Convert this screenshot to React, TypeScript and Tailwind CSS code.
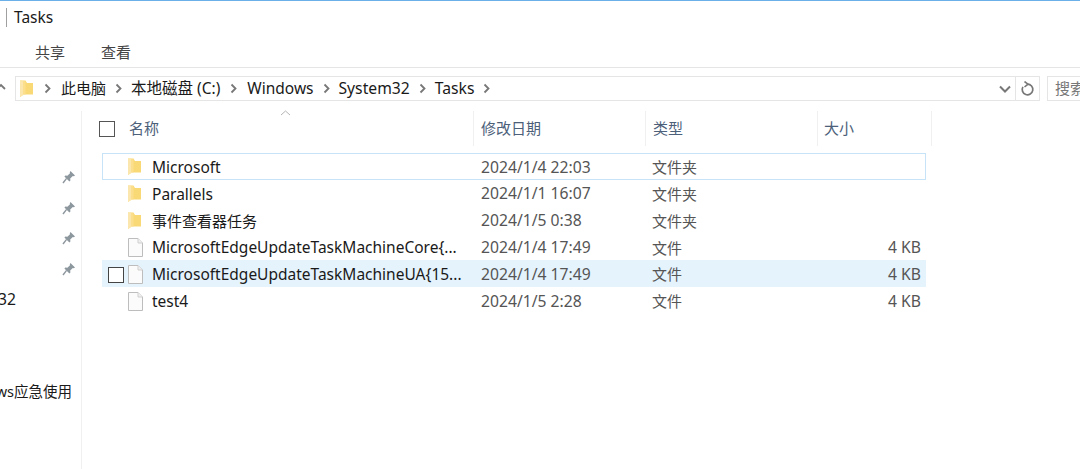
import React from "react";

const FONT = { fontFamily: '"Noto Sans", "Noto Sans CJK SC", sans-serif' };

function Folder({ className = "" }: { className?: string }) {
  return (
    <svg width="13" height="18" viewBox="0 0 13 18" className={`shrink-0 ${className}`}>
      <path d="M0 0.5h5.5L7 3h6v11.5H3.5L0 17z" fill="#f9d976" />
      <path d="M0 0.5h3.5V15L0 17z" fill="#fbe7ae" />
      <path d="M3.5 1h2v13.5h-2z" fill="#fcdf8c" />
    </svg>
  );
}

function FileIcon() {
  return (
    <svg width="15" height="19" viewBox="0 0 15 19" className="shrink-0">
      <path d="M.5.5h9.5l4.5 4.5v13.5H.5z" fill="#fbfbfb" stroke="#bdbdbd" />
      <path d="M10 .5V5h4.5" fill="#f0f0f0" stroke="#cfcfcf" />
    </svg>
  );
}

function Pin() {
  return (
    <svg width="14" height="14" viewBox="0 0 14 14">
      <path d="M8.5 1 13 5.5l-1.2.8-1-.3-2.6 2.6.2 2L7.4 11.6 2.4 6.6l1-1 2 .2L8 3.2l-.2-1z" fill="#8d979e" />
      <path d="M4.6 8.4 1 13" stroke="#8d979e" strokeWidth="1.4" fill="none" />
    </svg>
  );
}

function Sep() {
  return (
    <svg width="7" height="11" viewBox="0 0 7 11" className="shrink-0">
      <path d="M1.5 1.5 5.5 5.5 1.5 9.5" stroke="#777" strokeWidth="1.8" fill="none" />
    </svg>
  );
}

type Row = { name: string; date: string; type: string; size?: string; folder?: boolean; focus?: boolean; selected?: boolean; cjk?: boolean };

const rows: Row[] = [
  { name: "Microsoft", date: "2024/1/4 22:03", type: "文件夹", folder: true, focus: true },
  { name: "Parallels", date: "2024/1/1 16:07", type: "文件夹", folder: true },
  { name: "事件查看器任务", date: "2024/1/5 0:38", type: "文件夹", folder: true, cjk: true },
  { name: "MicrosoftEdgeUpdateTaskMachineCore{...", date: "2024/1/4 17:49", type: "文件", size: "4 KB" },
  { name: "MicrosoftEdgeUpdateTaskMachineUA{15...", date: "2024/1/4 17:49", type: "文件", size: "4 KB", selected: true },
  { name: "test4", date: "2024/1/5 2:28", type: "文件", size: "4 KB" },
];

function Header({ label, width, pad = "pl-[7px]" }: { label: string; width: string; pad?: string }) {
  return (
    <div className={`${width} ${pad} h-full flex items-center border-r border-[#f0f0f0] text-[15px] text-[#4c607a]`}>
      {label}
    </div>
  );
}

export default function App() {
  return (
    <div className="w-[1080px] h-[469px] overflow-hidden bg-white flex flex-col text-[#1a1a1a]" style={FONT}>
      <div className="h-px bg-[#6bb0e8] shrink-0" />
      <div className="h-[33px] shrink-0 flex items-center pl-[6px]">
        <div className="w-px h-[19px] bg-[#a0a0a0] mr-[7px]" />
        <span className="text-[15.5px]">Tasks</span>
      </div>
      <div className="h-[34px] shrink-0 flex items-center border-b border-[#e5e5e5] text-[15px] text-[#444] pl-[35px] gap-[36px] pt-[3px]">
        <span>共享</span>
        <span>查看</span>
      </div>

      <div className="h-[40px] shrink-0 flex items-center pt-px">
        <svg width="10" height="10" viewBox="0 0 10 10" className="ml-[-3px] mr-[8px] mt-[-4px] shrink-0">
          <path d="M1 6 4 3l4 4" stroke="#777" strokeWidth="1.8" fill="none" />
        </svg>
        <div className="w-[1025px] shrink-0 h-[25px] border border-[#e5e5e5] flex items-center text-[15px]">
          <Folder className="ml-[4px] mr-[11px]" />
          <Sep />
          <span className="ml-[10px]">此电脑</span>
          <span className="mx-[9px] flex"><Sep /></span>
          <span className="text-[15.5px]">本地磁盘 (C:)</span>
          <span className="mx-[10px] flex"><Sep /></span>
          <span className="text-[15.5px]">Windows</span>
          <span className="mx-[9px] flex"><Sep /></span>
          <span className="text-[15.7px]">System32</span>
          <span className="mx-[9px] flex"><Sep /></span>
          <span className="text-[15.7px]">Tasks</span>
          <span className="ml-[9px] flex"><Sep /></span>
          <div className="ml-auto flex items-center h-full">
            <svg width="14" height="10" viewBox="0 0 14 10" className="mr-[3px]">
              <path d="M2 2.5 7 7.5l5-5" stroke="#777" strokeWidth="2" fill="none" />
            </svg>
            <div className="w-[24px] h-full border-l border-[#e5e5e5] flex items-center justify-center">
              <svg width="15" height="16" viewBox="0 0 15 16">
                <path d="M7.5 3.2a5.3 5.3 0 1 1-4.6 2.7" stroke="#777" strokeWidth="1.7" fill="none" />
                <path d="M4.5 0.5 8 3.2 4.5 6" stroke="#777" strokeWidth="1.6" fill="none" />
              </svg>
            </div>
          </div>
        </div>
        <div className="ml-[7px] w-[60px] shrink-0 h-[25px] border border-[#e5e5e5] pl-[7px] flex items-center text-[15px] text-[#777] whitespace-nowrap">
          搜索
        </div>
      </div>

      <div className="flex flex-1 min-h-0">
        <div className="w-[82px] shrink-0 mt-[3px] border-r border-[#f0f0f0] pt-[51px] flex flex-col items-end">
          {[0, 1, 2, 3].map((i) => (
            <div key={i} className="h-[30.5px] flex items-center pr-[5px]">
              <Pin />
            </div>
          ))}
          <div className="self-start text-[15.7px] mt-[5px] leading-[20px] ml-[-2px]">32</div>
          <div className="self-stretch text-[14.5px] leading-[20px] mt-[72px] whitespace-nowrap pr-[9px] flex justify-end">
            ws应急使用
          </div>
        </div>

        <div className="flex-1 min-w-0 pl-[20px]">
          <div className="h-[39px] pt-[3px] pb-px flex items-center relative">
            <svg width="11" height="6" viewBox="0 0 11 6" className="absolute left-[178px] top-[2px]">
              <path d="M1 5 5.5 1 10 5" stroke="#b5b5b5" fill="none" />
            </svg>
            <div className="w-[372px] h-full flex items-center border-r border-[#f0f0f0]">
              <div className="w-[16px] h-[16px] border-[1.5px] border-[#555] ml-[-3px] mr-[14px]" />
              <span className="text-[15px] text-[#4c607a]">名称</span>
            </div>
            <Header label="修改日期" width="w-[172px]" />
            <Header label="类型" width="w-[172px]" />
            <Header label="大小" width="w-[114px]" pad="pl-[6px]" />
          </div>

          <div className="mt-[6px] w-[824px] flex flex-col">
            {rows.map((r) => (
              <div
                key={r.name}
                className={`h-[26.8px] pt-[2px] flex items-center border ${
                  r.focus ? "border-[#c6e3f8]" : r.selected ? "border-[#e5f3fd] bg-[#e5f3fd]" : "border-transparent"
                }`}
              >
                <div className="w-[25px] flex justify-end shrink-0">
                  {r.selected && <div className="w-[16px] h-[16px] border-[1.5px] border-[#444] bg-white mr-[4px]" />}
                </div>
                <div className="w-[24px] shrink-0 flex items-center">
                  {r.folder ? <Folder /> : <FileIcon />}
                </div>
                <div className={`w-[329px] shrink-0 whitespace-nowrap overflow-hidden ${r.cjk ? "text-[15px]" : "text-[15.5px]"}`}>{r.name}</div>
                <div className="w-[172px] shrink-0 text-[#555] text-[15.7px]">{r.date}</div>
                <div className="w-[172px] shrink-0 text-[#555] text-[15px] ml-[-1px]">{r.type}</div>
                <div className="flex-1 text-right pr-[4px] text-[#555] text-[15.7px]">{r.size}</div>
              </div>
            ))}
          </div>
        </div>
      </div>
    </div>
  );
}
